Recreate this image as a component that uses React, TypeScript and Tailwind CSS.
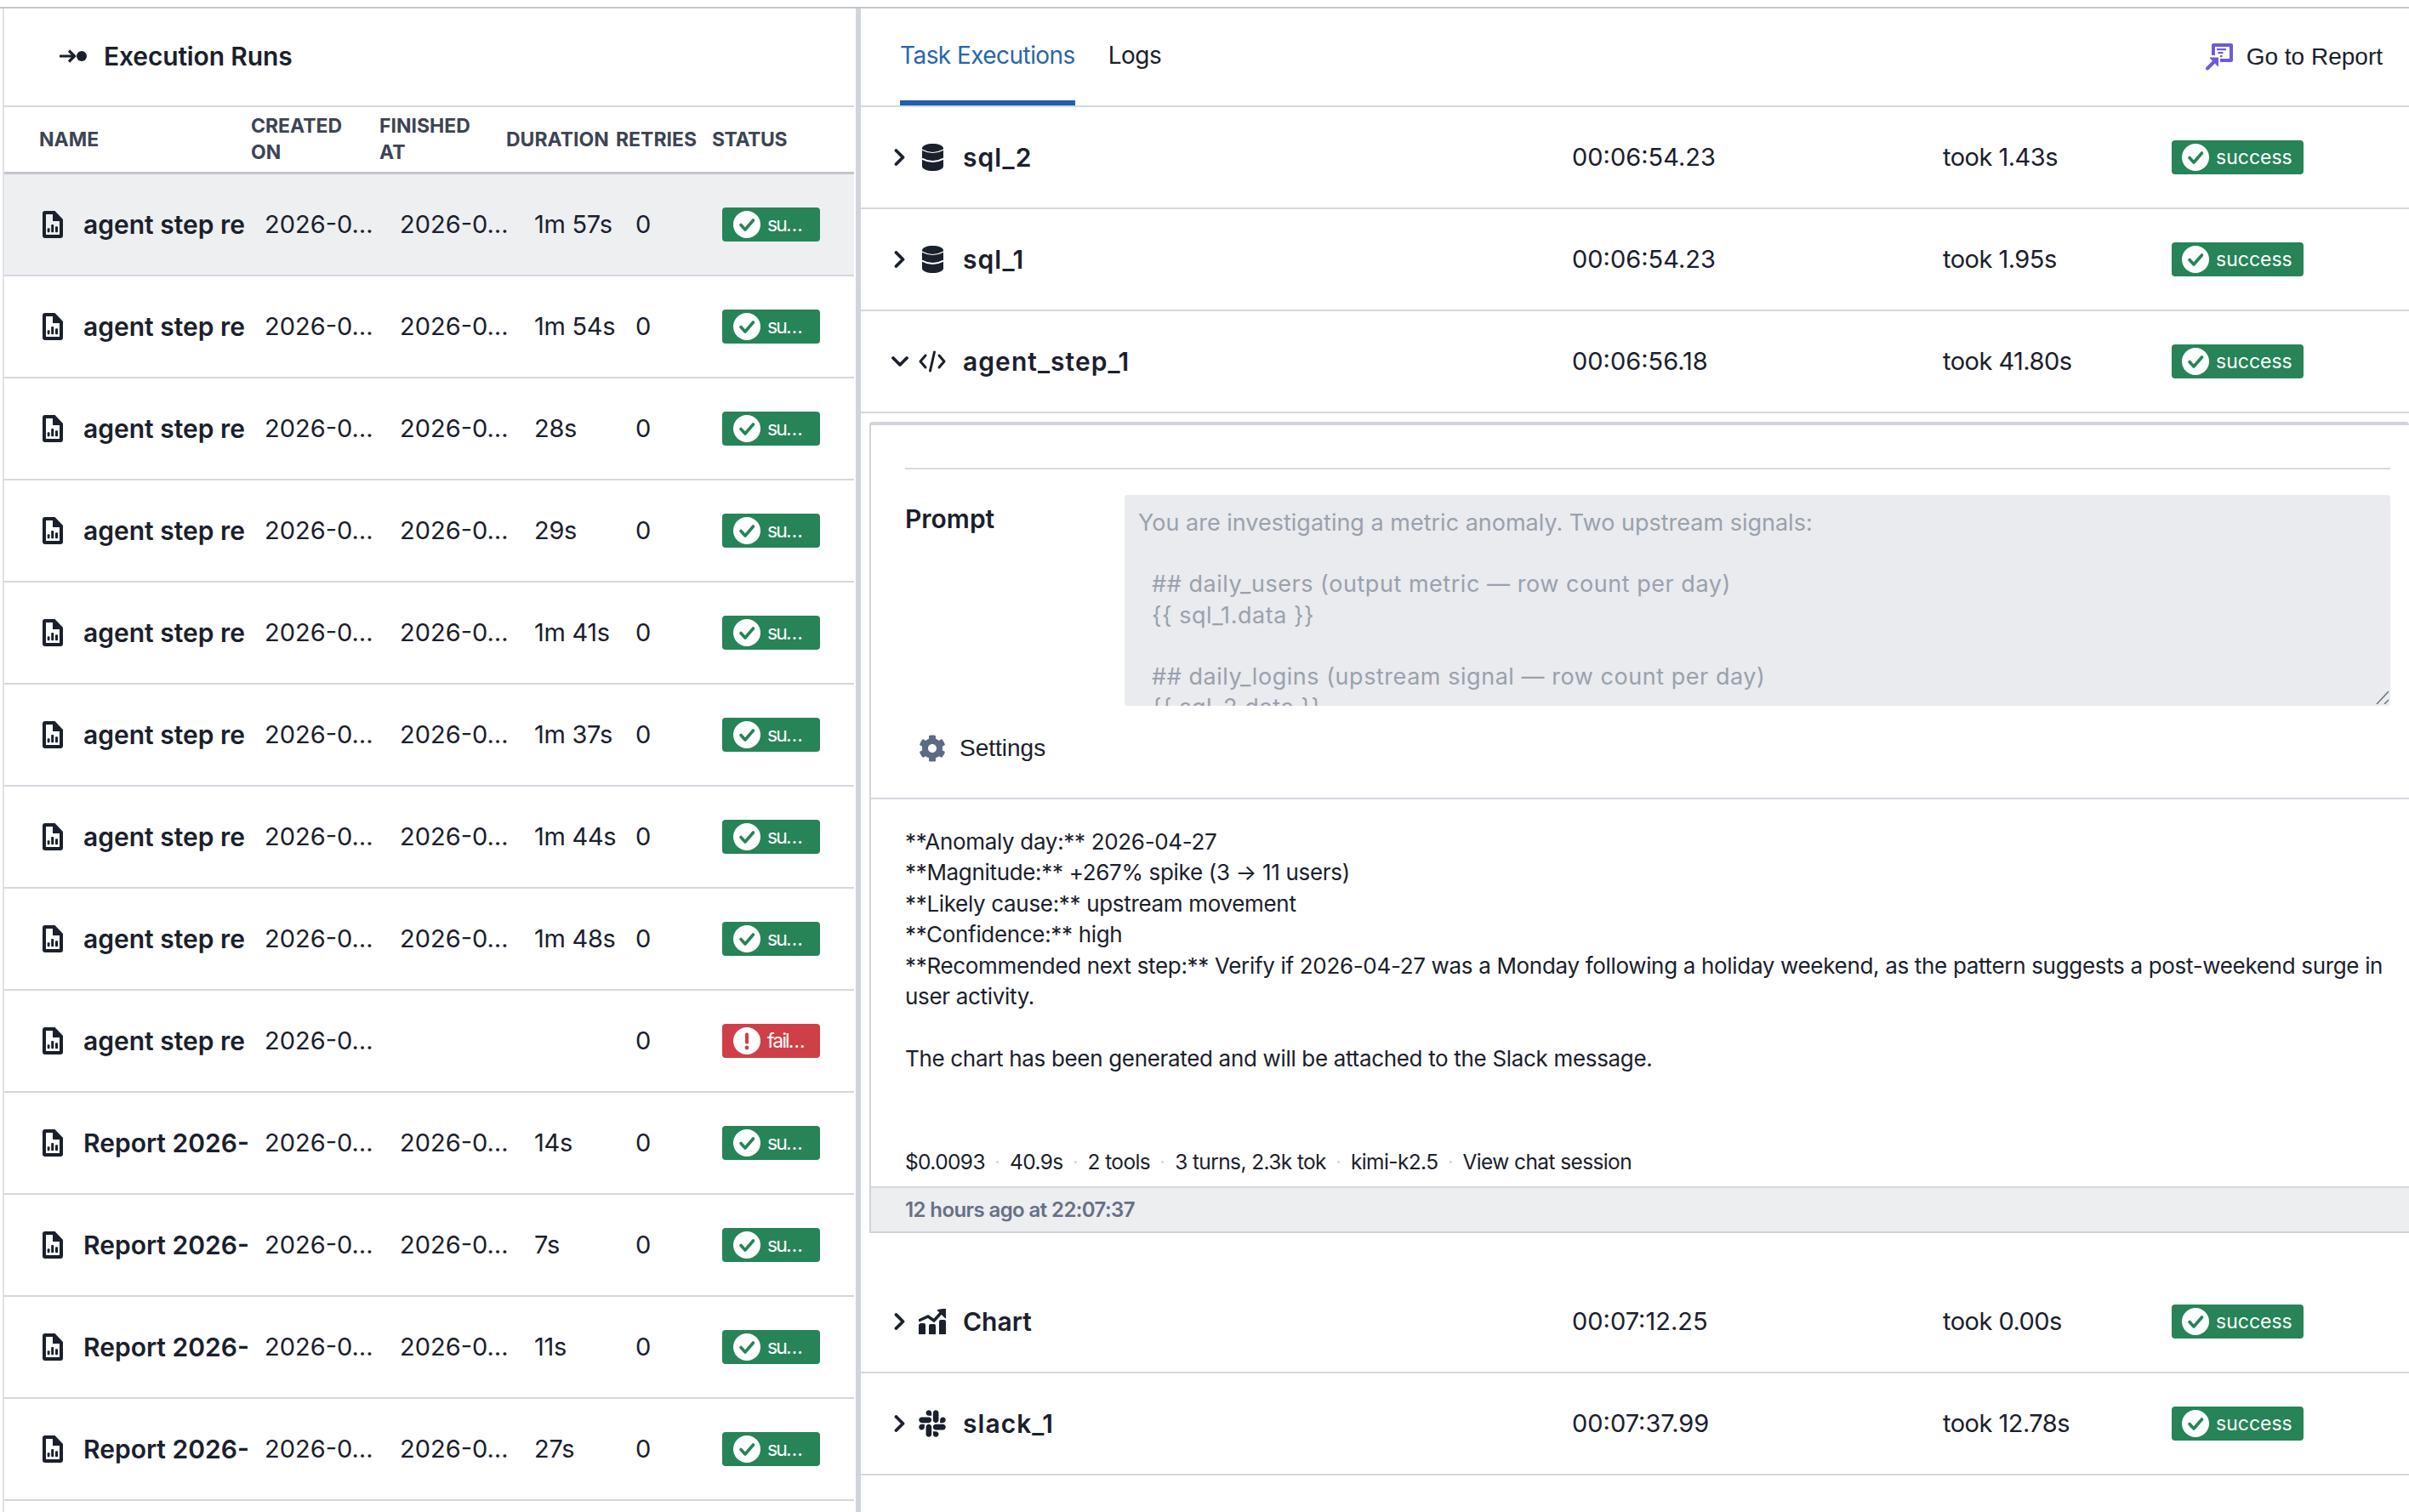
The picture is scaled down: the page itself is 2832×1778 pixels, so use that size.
import { FaCog, FaSlack } from "react-icons/fa";

const runs = [
  { name: "agent step re", finished: true, duration: "1m 57s", ok: true, active: true },
  { name: "agent step re", finished: true, duration: "1m 54s", ok: true },
  { name: "agent step re", finished: true, duration: "28s", ok: true },
  { name: "agent step re", finished: true, duration: "29s", ok: true },
  { name: "agent step re", finished: true, duration: "1m 41s", ok: true },
  { name: "agent step re", finished: true, duration: "1m 37s", ok: true },
  { name: "agent step re", finished: true, duration: "1m 44s", ok: true },
  { name: "agent step re", finished: true, duration: "1m 48s", ok: true },
  { name: "agent step re", finished: false, duration: "", ok: false },
  { name: "Report 2026-", finished: true, duration: "14s", ok: true },
  { name: "Report 2026-", finished: true, duration: "7s", ok: true },
  { name: "Report 2026-", finished: true, duration: "11s", ok: true },
  { name: "Report 2026-", finished: true, duration: "27s", ok: true },
];

const outputLines = [
  "**Anomaly day:** 2026-04-27",
  "**Magnitude:** +267% spike (3 → 11 users)",
  "**Likely cause:** upstream movement",
  "**Confidence:** high",
  "**Recommended next step:** Verify if 2026-04-27 was a Monday following a holiday weekend, as the pattern suggests a post-weekend surge in",
  "user activity.",
  "",
  "The chart has been generated and will be attached to the Slack message.",
];

const meta = ["$0.0093", "40.9s", "2 tools", "3 turns, 2.3k tok", "kimi-k2.5", "View chat session"];

const promptLines = [
  "## daily_users (output metric — row count per day)",
  "{{ sql_1.data }}",
  "",
  "## daily_logins (upstream signal — row count per day)",
  "{{ sql_2.data }}",
];

function CheckCircle({ color }: { color: string }) {
  return (
    <svg viewBox="0 0 32 32" className="h-[32px] w-[32px] shrink-0">
      <circle cx="16" cy="16" r="16" fill="#fff" />
      <path d="M9 16.500l5 5.500 9.500-11" fill="none" stroke={color} strokeWidth="3.600" strokeLinecap="round" strokeLinejoin="round" />
    </svg>
  );
}

function AlertCircle() {
  return (
    <svg viewBox="0 0 32 32" className="h-[32px] w-[32px] shrink-0">
      <circle cx="16" cy="16" r="16" fill="#fff" />
      <rect x="14" y="6.500" width="4" height="13" rx="1.500" fill="#cf3f47" />
      <circle cx="16" cy="24" r="2.400" fill="#cf3f47" />
    </svg>
  );
}

function FileChart() {
  return (
    <svg viewBox="0 0 24 32" className="h-[32px] w-[24px] shrink-0">
      <path
        fillRule="evenodd"
        fill="#1a202c"
        d="M3 0h11.500L24 10v19a3 3 0 0 1-3 3H3a3 3 0 0 1-3-3V3a3 3 0 0 1 3-3zM4 4v24h16V12h-8V4z"
      />
      <rect x="5.700" y="20.300" width="2.800" height="5" rx="1" fill="#1a202c" />
      <rect x="10.200" y="16" width="3" height="9.300" rx="1" fill="#1a202c" />
      <rect x="15" y="18.300" width="3" height="7" rx="1" fill="#1a202c" />
    </svg>
  );
}

function RunsIcon() {
  return (
    <svg viewBox="0 0 32 16" className="h-[16px] w-[32px] shrink-0">
      <path d="M1 8h16" stroke="#1a202c" strokeWidth="3.200" strokeLinecap="round" />
      <path d="M11 1.500L17.500 8 11 14.500" fill="none" stroke="#1a202c" strokeWidth="3.200" />
      <circle cx="26" cy="8" r="6" fill="#1a202c" />
    </svg>
  );
}

function DbIcon() {
  return (
    <svg viewBox="0 0 25 32" className="h-[32px] w-[25px] shrink-0">
      <path d="M0 5.500C0 2 6 0 12.500 0S25 2 25 5.500v21C25 30 19 32 12.500 32S0 30 0 26.500z" fill="#1a202c" />
      <path d="M0 7Q12.500 14 25 7" fill="none" stroke="#fff" strokeWidth="1.200" />
      <path d="M0 17.500Q12.500 24.500 25 17.500" fill="none" stroke="#fff" strokeWidth="2" />
    </svg>
  );
}

function CodeIcon() {
  return (
    <svg viewBox="0 0 32 26" className="h-[26px] w-[32px] shrink-0" fill="none" stroke="#1a202c" strokeWidth="3" strokeLinecap="round" strokeLinejoin="round">
      <path d="M8 6l-6 7 6 7" />
      <path d="M24 6l6 7-6 7" />
      <path d="M18.500 2l-5 22" />
    </svg>
  );
}

function ChartIcon() {
  return (
    <svg viewBox="0 0 32 30" className="h-[30px] w-[32px] shrink-0" fill="#1a202c">
      <path d="M0 19a3 3 0 0 1 3-2h3a2 2 0 0 1 2 2v11H0z" />
      <path d="M12 20a2 2 0 0 1 2-2h4a2 2 0 0 1 2 2v10h-8z" />
      <path d="M24 15a2 2 0 0 1 2-2h4a2 2 0 0 1 2 2v15h-8z" />
      <path d="M0 14l11-5 7 5 9-10" fill="none" stroke="#1a202c" strokeWidth="3.400" />
      <path d="M22 1.500L32 0l-.3 11.300z" stroke="#1a202c" strokeWidth="1" strokeLinejoin="round" />
    </svg>
  );
}

function ReportIcon() {
  return (
    <svg viewBox="0 0 33 32" className="h-[32px] w-[33px] shrink-0">
      <rect x="7" y="0" width="25" height="22" rx="2" fill="#6f5bd6" />
      <rect x="11" y="4" width="17" height="14" fill="#fff" />
      <rect x="13" y="6" width="11" height="2.200" fill="#6f5bd6" />
      <rect x="14.500" y="10" width="6" height="2.200" fill="#6f5bd6" />
      <rect x="14.500" y="14" width="5" height="2.200" fill="#6f5bd6" />
      <path d="M0 14h17v17H0z" fill="#fff" />
      <path d="M2 29.500l9-9" stroke="#6f5bd6" strokeWidth="4" strokeLinecap="round" />
      <path d="M5 17h9.500v10z" fill="#6f5bd6" stroke="#6f5bd6" strokeLinejoin="round" />
    </svg>
  );
}

function Chevron({ open }: { open?: boolean }) {
  return (
    <svg viewBox="0 0 20 20" className="h-[20px] w-[20px] shrink-0" fill="none" stroke="#1a202c" strokeWidth="3.800" strokeLinecap="round" strokeLinejoin="round">
      {open ? <path d="M2 6l8 8 8-8" /> : <path d="M5.500 2l8 8-8 8" />}
    </svg>
  );
}

function Task({ name, icon, time, took, open }: { name: string; icon: React.ReactNode; time: string; took: string; open?: boolean }) {
  return (
    <div className="flex h-[120px] items-center border-b-2 border-[#d5d8df] pl-[36px] text-[29px] text-[#1a202c]">
      <Chevron open={open} />
      <div className="ml-[12px] flex w-[32px] justify-center">{icon}</div>
      <div className={`ml-[20px] w-[716px] text-[30px] font-semibold ${name.includes("_") ? "tracking-[0.035em]" : ""}`}>{name}</div>
      <div className="w-[436px]">{time}</div>
      <div className="w-[269px] tracking-[-0.018em]">{took}</div>
      <div className="flex h-[40px] w-[155px] items-center gap-[8px] rounded-[4px] bg-[#268457] pl-[12px] text-[23px] text-white">
        <CheckCircle color="#268457" />
        success
      </div>
    </div>
  );
}

export default function App() {
  return (
    <div className="h-[1778px] w-[2832px] overflow-hidden bg-white font-['Inter',sans-serif] text-[#1a202c]">
      <div className="h-[10px] border-b-2 border-[#c6c7cb]" />
      <div className="flex">
        {/* Execution runs */}
        <div className="ml-[3px] w-[1001px] shrink-0 border-l-2 border-[#dfe1e6]">
          <div className="flex h-[116px] items-center gap-[20px] border-b-2 border-[#d5d8df] pb-[2px] pl-[65px]">
            <RunsIcon />
            <span className="text-[30px] font-semibold tracking-[-0.005em]">Execution Runs</span>
          </div>
          <div className="flex h-[79px] items-center border-b-[3px] border-[#c4c6cb] pl-[41px] text-[23px] font-bold uppercase leading-[31px] text-[#3d4454]">
            <div className="w-[249px]">Name</div>
            <div className="w-[151px]">Created<br />on</div>
            <div className="w-[149px]">Finished<br />at</div>
            <div className="w-[129px]">Duration</div>
            <div className="w-[113px]">Retries</div>
            <div className="tracking-[-0.02em]">Status</div>
          </div>
          {runs.map((r, i) => (
            <div
              key={i}
              className={`flex h-[120px] items-center border-b-2 border-[#d5d8df] pl-[45px] text-[29px] ${r.active ? "bg-[#edeff1]" : ""}`}
            >
              <FileChart />
              <div className="ml-[24px] w-[213px] overflow-hidden whitespace-nowrap text-[30px] font-semibold">{r.name}</div>
              <div className="w-[159px]">2026-0…</div>
              <div className="w-[158px]">{r.finished ? "2026-0…" : ""}</div>
              <div className="w-[119px] tracking-[-0.01em]">{r.duration}</div>
              <div className="w-[102px]">0</div>
              <div
                className={`flex h-[40px] w-[115px] items-center gap-[8px] rounded-[4px] pl-[13px] text-[23px] tracking-[-0.08em] text-white ${r.ok ? "bg-[#268457]" : "bg-[#cf3f47]"}`}
              >
                {r.ok ? <CheckCircle color="#268457" /> : <AlertCircle />}
                {r.ok ? "su…" : "fail…"}
              </div>
            </div>
          ))}
        </div>

        <div className="ml-[2px] h-[1768px] w-[6px] shrink-0 bg-[#d0d5dd]" />

        {/* Task executions */}
        <div className="min-w-0 flex-1">
          <div className="flex h-[116px] items-end justify-between border-b-2 border-[#d5d8df] pl-[46px] pr-[31px]">
            <div className="flex gap-[39px]">
              <div className="flex h-[114px] flex-col items-center justify-center border-b-[6px] border-[#1f5fad] pt-[2px] text-[28px] tracking-[-0.02em] text-[#2766ae]">
                Task Executions
              </div>
              <div className="flex h-[114px] items-center pb-[4px] text-[28px] tracking-[-0.02em]">Logs</div>
            </div>
            <div className="flex h-[114px] items-center gap-[15px] font-['Liberation_Sans',sans-serif] text-[28px]">
              <ReportIcon />
              Go to Report
            </div>
          </div>

          <Task name="sql_2" icon={<DbIcon />} time="00:06:54.23" took="took 1.43s" />
          <Task name="sql_1" icon={<DbIcon />} time="00:06:54.23" took="took 1.95s" />
          <Task name="agent_step_1" icon={<CodeIcon />} time="00:06:56.18" took="took 41.80s" open />

          <div className="ml-[10px] mt-[10px] rounded-t-[4px] border-b-2 border-l-2 border-t-4 border-[#d0d3da]">
            <div className="px-[40px] pt-[50px]">
              <div className="mr-[-18px] border-t-2 border-[#d5d9de]" />
              <div className="mt-[30px] flex">
                <div className="w-[258px] shrink-0 pt-[6px] text-[30px] font-semibold">Prompt</div>
                <div className="relative mr-[-18px] h-[248px] min-w-0 flex-1 overflow-hidden whitespace-pre rounded-[4px] bg-[#e9ebee] px-[16px] py-[15px] text-[27px] leading-[36.200px] text-[#9aa1ad]">
                  <div>You are investigating a metric anomaly. Two upstream signals:</div>
                  <div className="h-[36.200px]" />
                  {promptLines.map((line, i) => (
                    <div key={i} className="h-[36.200px] pl-[16px] tracking-[0.02em]">{line}</div>
                  ))}
                  <svg viewBox="0 0 16 16" className="absolute bottom-[2px] right-[1px] h-[16px] w-[16px]" stroke="#6b7078" strokeWidth="1.500">
                    <path d="M1 16L15 1" />
                    <path d="M10 16l5-5" />
                  </svg>
                </div>
              </div>
            </div>
            <div className="flex h-[110px] items-center gap-[16px] border-b-2 border-[#d5d8df] pb-[9px] pl-[56px] font-['Liberation_Sans',sans-serif] text-[28px]">
              <FaCog className="h-[32px] w-[32px] text-[#5c6a82]" />
              Settings
            </div>
            <div className="flex h-[455px] flex-col justify-between pl-[40px] pt-[32px]">
              <div className="whitespace-pre text-[26px] leading-[36.400px] tracking-[-0.0125em]">
                {outputLines.map((line, i) => (
                  <div key={i} className="h-[36.400px]">{line}</div>
                ))}
              </div>
              <div className="mb-[10px] flex items-center gap-[13px] text-[24.500px] tracking-[-0.025em]">
                {meta.map((m, i) => (
                  <div key={m} className="flex items-center gap-[13px]">
                    {i > 0 && <span className="h-[3px] w-[3px] rounded-full bg-[#d0d3da]" />}
                    <span>{m}</span>
                  </div>
                ))}
              </div>
            </div>
            <div className="flex h-[53px] items-center border-t-2 border-[#d5d8df] bg-[#eceef0] pl-[40px] text-[24px] font-semibold tracking-[-0.025em] text-[#667085]">
              12 hours ago at 22:07:37
            </div>
          </div>

          <div className="mt-[45px]">
            <Task name="Chart" icon={<ChartIcon />} time="00:07:12.25" took="took 0.00s" />
            <Task name="slack_1" icon={<FaSlack className="h-[36px] w-[36px] shrink-0 text-[#1a202c]" />} time="00:07:37.99" took="took 12.78s" />
          </div>
        </div>
      </div>
    </div>
  );
}
